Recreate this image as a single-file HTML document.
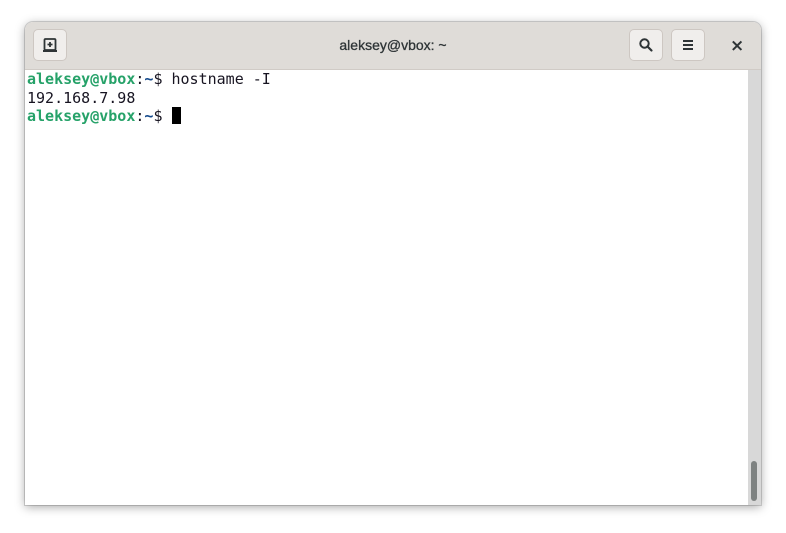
<!DOCTYPE html>
<html><head><meta charset="utf-8"><style>
html,body{margin:0;padding:0;width:786px;height:533px;background:#fff;overflow:hidden}
.win{position:absolute;left:25px;top:22px;width:736px;height:483px;border-radius:8px 8px 0 0;box-shadow:0 2px 10px rgba(0,0,0,.35),0 0 0 1px rgba(0,0,0,.15);overflow:hidden;background:#fff}
.hdr{position:absolute;left:0;top:0;width:736px;height:47px;background:#dfdcd8;border-bottom:1px solid #d0cbc6}
.title{position:absolute;left:0;right:0;top:15px;text-align:center;font:14px "Liberation Sans",sans-serif;color:#2e3436;-webkit-text-stroke:0.3px #2e3436}
.btn{position:absolute;top:7px;width:34px;height:32px;border-radius:5px;background:#f0eeec;border:1px solid #cdc7c2;box-sizing:border-box;display:flex;align-items:center;justify-content:center}
.x{position:absolute;left:705px;top:14px;font:bold 17px "DejaVu Sans",sans-serif;color:#2e3436}
.term{position:absolute;left:2px;top:48px;font:15px/18.5px "DejaVu Sans Mono","Liberation Mono",monospace;color:#171421;white-space:pre}
.g{color:#26a269;font-weight:bold}.b{color:#12488b;font-weight:bold}
.cur{display:inline-block;width:9px;height:17px;background:#000;vertical-align:-3px}
.sb{position:absolute;left:723px;top:48px;width:13px;height:435px;background:#d8d8d8}
.th{position:absolute;left:3px;top:391px;width:6px;height:40px;border-radius:3px;background:#7e8281}
</style></head><body>
<div class="win">
<div class="hdr">
<div class="btn" style="left:8px"><svg width="16" height="16" viewBox="0 0 16 16"><rect x="2.5" y="2" width="11" height="11" rx="1" fill="none" stroke="#2e3436" stroke-width="1.8"/><path d="M1 14h14" stroke="#2e3436" stroke-width="2"/><path d="M8 5v5M5.5 7.5h5" stroke="#2e3436" stroke-width="1.8"/></svg></div>
<div class="title">aleksey@vbox: ~</div>
<div class="btn" style="left:604px"><svg width="16" height="16" viewBox="0 0 16 16"><circle cx="6.5" cy="6.5" r="4.2" fill="none" stroke="#2e3436" stroke-width="2"/><path d="M9.5 9.5l4 4" stroke="#2e3436" stroke-width="2.2" stroke-linecap="round"/></svg></div>
<div class="btn" style="left:646px"><svg width="16" height="16" viewBox="0 0 16 16"><path d="M3 4h10M3 8h10M3 12h10" stroke="#2e3436" stroke-width="2"/></svg></div>
<div class="x">×</div>
</div>
<div class="term"><span class="g">aleksey@vbox</span>:<span class="b">~</span>$ hostname -I
192.168.7.98
<span class="g">aleksey@vbox</span>:<span class="b">~</span>$ <span class="cur"></span></div>
<div class="sb"><div class="th"></div></div>
</div>
</body></html>
